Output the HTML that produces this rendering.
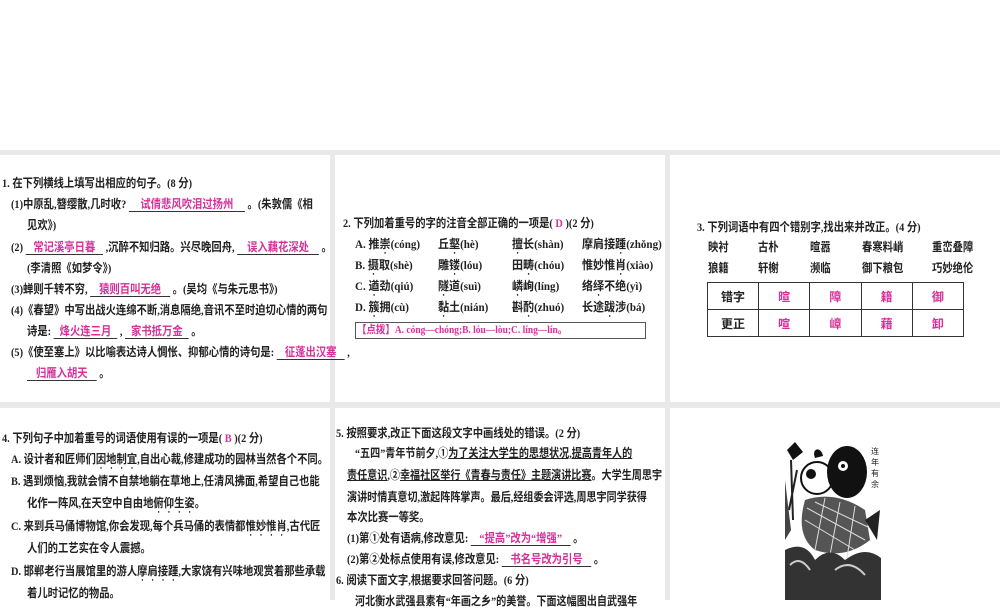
<!DOCTYPE html>
<html><head><meta charset="utf-8"><style>
body{margin:0;width:1000px;height:600px;background:#fff;position:relative;overflow:hidden;font-family:"Liberation Serif","Noto Sans CJK SC",sans-serif;font-size:12px;color:#222;}
.g{position:absolute;background:#e9e9e9;}
.l{position:absolute;white-space:nowrap;line-height:14px;font-weight:bold;transform:scaleX(0.86);transform-origin:0 0;}
.s{transform:scaleX(0.84);}
.o{transform:scaleX(0.92);}
.b{display:inline-block;border-bottom:1px solid #333;text-align:center;color:#d6309a;line-height:13px;}
.p{color:#d6309a;}
.d{text-emphasis:dot;-webkit-text-emphasis:dot;text-emphasis-position:under;-webkit-text-emphasis-position:under;}
table{position:absolute;border-collapse:collapse;}
td{border:1px solid #333;text-align:center;font-weight:bold;height:26px;padding:0;}
</style></head><body>
<div class="g" style="left:0;top:150px;width:1000px;height:5px"></div>
<div class="g" style="left:0;top:402px;width:1000px;height:6px"></div>
<div class="g" style="left:330px;top:150px;width:5px;height:450px"></div>
<div class="g" style="left:665px;top:150px;width:5px;height:450px"></div>

<!-- panel 1 -->
<div class="l" style="left:2px;top:176px">1. 在下列横线上填写出相应的句子。(8 分)</div>
<div class="l" style="left:11px;top:197px">(1)中原乱,簪缨散,几时收? <span class="b" style="width:135px">试倩悲风吹泪过扬州</span> 。(朱敦儒《相</div>
<div class="l" style="left:27px;top:218px">见欢》)</div>
<div class="l" style="left:11px;top:240px">(2) <span class="b" style="width:90px">常记溪亭日暮</span> ,沉醉不知归路。兴尽晚回舟, <span class="b" style="width:95px">误入藕花深处</span> 。</div>
<div class="l" style="left:27px;top:261px">(李清照《如梦令》)</div>
<div class="l" style="left:11px;top:282px">(3)蝉则千转不穷, <span class="b" style="width:93px">猿则百叫无绝</span> 。(吴均《与朱元思书》)</div>
<div class="l" style="left:11px;top:303px">(4)《春望》中写出战火连绵不断,消息隔绝,音讯不至时迫切心情的两句</div>
<div class="l" style="left:27px;top:324px">诗是: <span class="b" style="width:74px">烽火连三月</span> , <span class="b" style="width:74px">家书抵万金</span> 。</div>
<div class="l" style="left:11px;top:345px">(5)《使至塞上》以比喻表达诗人惆怅、抑郁心情的诗句是: <span class="b" style="width:79px">征蓬出汉塞</span> ,</div>
<div class="l" style="left:27px;top:366px"><span class="b" style="width:81px">归雁入胡天</span> 。</div>

<!-- panel 2 -->
<div class="l" style="left:343px;top:216px">2. 下列加着重号的字的注音全部正确的一项是( <span class="p">D</span> )(2 分)</div>
<div class="l o" style="left:355px;top:237px">A. 推<span class="d">崇</span>(cóng)</div>
<div class="l o" style="left:438px;top:237px">丘<span class="d">壑</span>(hè)</div>
<div class="l o" style="left:512px;top:237px"><span class="d">擅</span>长(shàn)</div>
<div class="l o" style="left:582px;top:237px">摩肩接<span class="d">踵</span>(zhǒng)</div>
<div class="l o" style="left:355px;top:258px">B. <span class="d">摄</span>取(shè)</div>
<div class="l o" style="left:438px;top:258px">雕<span class="d">镂</span>(lóu)</div>
<div class="l o" style="left:512px;top:258px">田<span class="d">畴</span>(chóu)</div>
<div class="l o" style="left:582px;top:258px">惟妙惟<span class="d">肖</span>(xiào)</div>
<div class="l o" style="left:355px;top:279px">C. <span class="d">遒</span>劲(qiú)</div>
<div class="l o" style="left:438px;top:279px"><span class="d">隧</span>道(suì)</div>
<div class="l o" style="left:512px;top:279px"><span class="d">嶙</span>峋(líng)</div>
<div class="l o" style="left:582px;top:279px">络<span class="d">绎</span>不绝(yì)</div>
<div class="l o" style="left:355px;top:300px">D. <span class="d">簇</span>拥(cù)</div>
<div class="l o" style="left:438px;top:300px"><span class="d">黏</span>土(nián)</div>
<div class="l o" style="left:512px;top:300px">斟<span class="d">酌</span>(zhuó)</div>
<div class="l o" style="left:582px;top:300px">长途<span class="d">跋</span>涉(bá)</div>
<div style="position:absolute;left:355px;top:322px;width:289px;height:15px;border:1px solid #555;"></div>
<div class="l p" style="left:357px;top:323px;font-size:11px">【点拨】A. cóng—chóng;B. lóu—lòu;C. líng—lín。</div>

<!-- panel 3 -->
<div class="l" style="left:697px;top:220px">3. 下列词语中有四个错别字,找出来并改正。(4 分)</div>
<div class="l" style="left:708px;top:240px">映衬</div><div class="l" style="left:758px;top:240px">古朴</div><div class="l" style="left:810px;top:240px">暄嚣</div><div class="l" style="left:862px;top:240px">春寒料峭</div><div class="l" style="left:932px;top:240px">重峦叠障</div>
<div class="l" style="left:708px;top:261px">狼籍</div><div class="l" style="left:758px;top:261px">轩榭</div><div class="l" style="left:810px;top:261px">濒临</div><div class="l" style="left:862px;top:261px">御下粮包</div><div class="l" style="left:932px;top:261px">巧妙绝伦</div>
<table style="left:707px;top:282px;width:257px">
<tr><td style="width:50px">错字</td><td class="p">暄</td><td class="p">障</td><td class="p">籍</td><td class="p">御</td></tr>
<tr><td>更正</td><td class="p">喧</td><td class="p">嶂</td><td class="p">藉</td><td class="p">卸</td></tr>
</table>

<!-- panel 4 -->
<div class="l" style="left:2px;top:431px">4. 下列句子中加着重号的词语使用有误的一项是( <span class="p">B</span> )(2 分)</div>
<div class="l" style="left:11px;top:452px">A. 设计者和匠师们<span class="d">因地制宜</span>,自出心裁,修建成功的园林当然各个不同。</div>
<div class="l" style="left:11px;top:474px">B. 遇到烦恼,我就会情不自禁地躺在草地上,任清风拂面,希望自己也能</div>
<div class="l" style="left:27px;top:496px">化作一阵风,在天空中自由地<span class="d">俯仰生姿</span>。</div>
<div class="l" style="left:11px;top:519px">C. 来到兵马俑博物馆,你会发现,每个兵马俑的表情都<span class="d">惟妙惟肖</span>,古代匠</div>
<div class="l" style="left:27px;top:541px">人们的工艺实在令人震撼。</div>
<div class="l" style="left:11px;top:564px">D. 邯郸老行当展馆里的游人<span class="d">摩肩接踵</span>,大家饶有兴味地观赏着那些承载</div>
<div class="l" style="left:27px;top:586px">着儿时记忆的物品。</div>

<!-- panel 5 -->
<div class="l" style="left:336px;top:426px">5. 按照要求,改正下面这段文字中画线处的错误。(2 分)</div>
<div class="l s" style="left:355px;top:446px">“五四”青年节前夕,①<u>为了关注大学生的思想状况,提高青年人的</u></div>
<div class="l s" style="left:347px;top:468px"><u>责任意识</u>,②<u>幸福社区举行《青春与责任》主题演讲比赛</u>。大学生周思宇</div>
<div class="l s" style="left:347px;top:490px">演讲时情真意切,激起阵阵掌声。最后,经组委会评选,周思宇同学获得</div>
<div class="l" style="left:347px;top:510px">本次比赛一等奖。</div>
<div class="l" style="left:347px;top:531px">(1)第①处有语病,修改意见: <span class="b" style="width:116px">“提高”改为“增强”</span> 。</div>
<div class="l" style="left:347px;top:552px">(2)第②处标点使用有误,修改意见: <span class="b" style="width:104px">书名号改为引号</span> 。</div>
<div class="l" style="left:336px;top:573px">6. 阅读下面文字,根据要求回答问题。(6 分)</div>
<div class="l s" style="left:355px;top:594px">河北衡水武强县素有“年画之乡”的美誉。下面这幅图出自武强年</div>

<!-- panel 6 image -->
<svg style="position:absolute;left:785px;top:440px" width="96" height="160" viewBox="0 0 96 160">
<rect x="0" y="0" width="96" height="160" fill="#fff"/>
<path d="M2 10 L10 2 L18 12 L8 20Z" fill="#111"/>
<path d="M6 20 L8 80 M12 30 L4 70" stroke="#222" stroke-width="2"/>
<circle cx="32" cy="38" r="16" fill="#fff" stroke="#111" stroke-width="2"/>
<circle cx="26" cy="34" r="5" fill="#111"/>
<path d="M30 18 C26 8 36 6 38 16" fill="#111"/>
<ellipse cx="62" cy="32" rx="20" ry="26" fill="#111"/>
<circle cx="58" cy="26" r="5" fill="#fff"/><circle cx="58" cy="26" r="2" fill="#111"/>
<path d="M20 60 Q50 50 80 70 L85 100 Q60 120 30 110 Q10 95 20 60Z" fill="#555"/>
<path d="M22 68 L80 100 M30 62 L85 88 M20 80 L70 110 M40 58 L30 110 M55 62 L45 115 M70 66 L62 118" stroke="#ddd" stroke-width="1"/>
<path d="M0 110 Q20 100 30 120 Q45 105 60 120 Q80 105 96 118 L96 160 L0 160Z" fill="#333"/>
<path d="M5 125 Q15 115 25 130 M50 130 Q65 118 80 135" stroke="#ccc" stroke-width="2" fill="none"/>
<path d="M80 80 L95 70 L92 100 Z" fill="#222"/>
<path d="M0 40 L6 90 L0 100Z" fill="#444"/>
<text x="86" y="14" font-size="8" font-family="Noto Sans CJK SC,sans-serif" fill="#222">连</text>
<text x="86" y="25" font-size="8" font-family="Noto Sans CJK SC,sans-serif" fill="#222">年</text>
<text x="86" y="36" font-size="8" font-family="Noto Sans CJK SC,sans-serif" fill="#222">有</text>
<text x="86" y="47" font-size="8" font-family="Noto Sans CJK SC,sans-serif" fill="#222">余</text>
</svg>
</body></html>
